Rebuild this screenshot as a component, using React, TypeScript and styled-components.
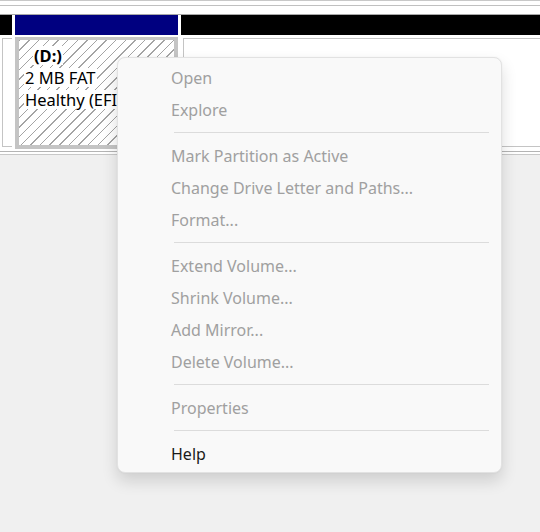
import React from "react";
import styled, { createGlobalStyle } from "styled-components";

type Item = { label: string; enabled?: boolean } | "sep";

const items: Item[] = [
  { label: "Open" },
  { label: "Explore" },
  "sep",
  { label: "Mark Partition as Active" },
  { label: "Change Drive Letter and Paths..." },
  { label: "Format..." },
  "sep",
  { label: "Extend Volume..." },
  { label: "Shrink Volume..." },
  { label: "Add Mirror..." },
  { label: "Delete Volume..." },
  "sep",
  { label: "Properties" },
  "sep",
  { label: "Help", enabled: true }
];

const App: React.FC = () => (
  <>
    <GlobalStyle />
    <Screen>
      <TopStrip />
      <DiskRow>
        <Partition $width={12}>
          <Header $color="#000" />
          <Body />
        </Partition>
        <Partition $width={163}>
          <Header $color="#000080" />
          <SelectedBody>
            <Hatch>
              <Label $bold $indent={14}>(D:)</Label>
              <Label $indent={5}>2 MB FAT</Label>
              <Label $indent={5}>Healthy (EFI System Partition)</Label>
            </Hatch>
          </SelectedBody>
        </Partition>
        <Partition $grow>
          <Header $color="#000" />
          <Body />
        </Partition>
      </DiskRow>
      <BottomRule />
      <Menu>
        {items.map((item, i) =>
          item === "sep" ? (
            <Separator key={i} />
          ) : (
            <MenuItem key={i} $enabled={!!item.enabled}>
              {item.label}
            </MenuItem>
          )
        )}
      </Menu>
    </Screen>
  </>
);

export default App;

const GlobalStyle = createGlobalStyle`
  html, body {
    margin: 0;
    padding: 0;
    background: #f0f0f0;
  }
  body {
    font-family: "Noto Sans", "Open Sans", sans-serif;
  }
`;

const Screen = styled.div`
  position: relative;
  width: 540px;
  height: 532px;
  overflow: hidden;
  background: #f0f0f0;
`;

const TopStrip = styled.div`
  height: 13px;
  background: #fff;
  border-top: 1px solid #c8c8c8;
  box-shadow: inset 0 4px 0 #fff, inset 0 5px 0 #c0c0c0;
`;

const DiskRow = styled.div`
  display: flex;
  gap: 3px;
  background: #fff;
  border-top: 1px solid #a8a8a8;
  padding-bottom: 2px;
`;

const Partition = styled.div<{ $width?: number; $grow?: boolean }>`
  display: flex;
  flex-direction: column;
  gap: 2px;
  width: ${(p) => (p.$width ? `${p.$width}px` : "auto")};
  flex: ${(p) => (p.$grow ? "1" : "none")};
`;

const Header = styled.div<{ $color: string }>`
  height: 20px;
  background: ${(p) => p.$color};
`;

const Body = styled.div`
  height: 107px;
  margin-left: 2px;
  border: 1px solid #c4c4c4;
  border-right: none;
  box-shadow: inset 1px 1px 0 #fff;
  background: #fff;
  margin-top: 1px;
`;

const SelectedBody = styled.div`
  height: 105px;
  border: 4px solid #c4c4c4;
  border-top-width: 3px;
  background: #fff;
`;

const Hatch = styled.div`
  height: 100%;
  box-sizing: border-box;
  padding-top: 6px;
  overflow: hidden;
  white-space: nowrap;
  background: repeating-linear-gradient(
    -45deg,
    #fff 0px,
    #fff 5.8px,
    #a4a4a4 5.8px,
    #a4a4a4 6.8px
  );
`;

const Label = styled.div<{ $bold?: boolean; $indent: number }>`
  display: table;
  margin: 0 0 3px ${(p) => p.$indent}px;
  padding: 0 1px;
  background: #fff;
  color: #000;
  font-size: 16.5px;
  line-height: 19px;
  font-weight: ${(p) => (p.$bold ? 700 : 400)};
`;

const BottomRule = styled.div`
  height: 2px;
  border-top: 1px solid #b4b4b4;
  border-bottom: 1px solid #c8c8c8;
  background: #fff;
`;

const Menu = styled.div`
  position: absolute;
  left: 117px;
  top: 57px;
  width: 383px;
  padding: 4px 0 2px;
  background: #f9f9f9;
  border: 1px solid #e2e2e2;
  border-radius: 8px;
  box-shadow: 0 8px 16px rgba(0, 0, 0, 0.14), 0 0 2px rgba(0, 0, 0, 0.06);
`;

const MenuItem = styled.div<{ $enabled: boolean }>`
  height: 32px;
  display: flex;
  align-items: center;
  padding-left: 53px;
  font-size: 16px;
  color: ${(p) => (p.$enabled ? "#1a1a1a" : "#a0a0a0")};
`;

const Separator = styled.div`
  height: 1px;
  margin: 6px 12px 7px 56px;
  background: #dcdcdc;
`;
